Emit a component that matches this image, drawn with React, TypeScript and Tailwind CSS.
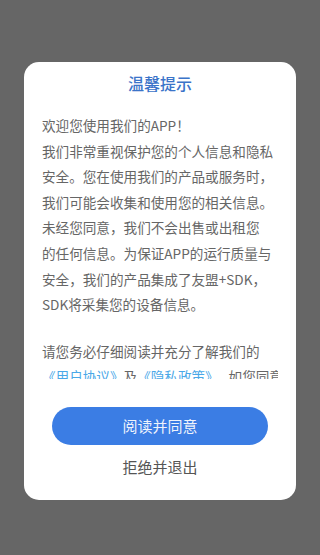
const bodyLines = [
  '欢迎您使用我们的APP！',
  '我们非常重视保护您的个人信息和隐私',
  '安全。您在使用我们的产品或服务时，',
  '我们可能会收集和使用您的相关信息。',
  '未经您同意，我们不会出售或出租您',
  '的任何信息。为保证APP的运行质量与',
  '安全，我们的产品集成了友盟+SDK，',
  'SDK将采集您的设备信息。',
];

const PrivacyDialog = () => (
  <div className="mx-[24px] h-[438px] rounded-[15px] bg-white flex flex-col">
    {/* Title */}
    <div className="pt-[9px] text-center text-[16px] font-medium leading-[24px] text-[#3b74c9]">温馨提示</div>

    <div className="mt-[18px] mx-[18px] h-[266px] overflow-hidden text-[13.6px] leading-[25.6px] text-[#666]">
      {bodyLines.map((line) => (
        <div key={line} className="whitespace-nowrap">
          {line}
        </div>
      ))}
      <div className="mt-[21px] whitespace-nowrap">请您务必仔细阅读并充分了解我们的</div>
      <div className="whitespace-nowrap">
        <span className="text-[#4aa8e8]">《用户协议》</span>及
        <span className="text-[#4aa8e8]">《隐私政策》</span>， 如您同意，请点击
      </div>
      <div className="whitespace-nowrap">“阅读并同意”开始使用我们的服务。</div>
    </div>

    {/* Actions */}
    <button className="mt-[28px] mx-[28px] h-[38px] rounded-full bg-[#3b7de4] text-[15px] text-[#eef3fc]">
      阅读并同意
    </button>
    <button className="mt-[12px] text-[15px] leading-[20px] text-[#555]">拒绝并退出</button>
  </div>
);

export default function App() {
  return (
    <div
      className="h-[555px] w-[320px] bg-[#666] pt-[62px]"
      style={{ fontFamily: '"Noto Sans CJK SC", "Noto Sans", sans-serif' }}
    >
      <PrivacyDialog />
    </div>
  );
}
